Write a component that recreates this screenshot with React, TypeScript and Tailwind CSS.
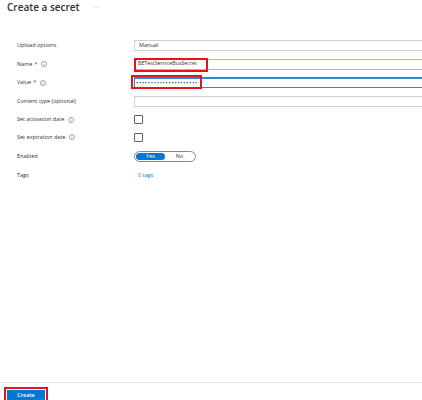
import React from 'react';

function InfoIcon() {
  return (
    <svg width="6" height="6" viewBox="0 0 12 12" className="ml-[4px] shrink-0">
      <circle cx="6" cy="6" r="5.2" fill="none" stroke="#605e5c" strokeWidth="1" />
      <line x1="6" y1="5.2" x2="6" y2="9" stroke="#605e5c" strokeWidth="1.1" />
      <circle cx="6" cy="3.4" r="0.7" fill="#605e5c" />
    </svg>
  );
}

interface RowProps {
  label: string;
  required?: boolean;
  info?: boolean;
  h: string;
  children?: React.ReactNode;
}

function Row({ label, required, info, h, children }: RowProps) {
  return (
    <div className={`flex items-center ${h}`}>
      <div className="w-[117px] shrink-0 flex items-center text-[5.5px] text-[#323130]">
        <span>{label}</span>
        {required && <span className="ml-[2px] text-[#a4262c]">*</span>}
        {info && <InfoIcon />}
      </div>
      <div className="flex-1 flex items-center">{children}</div>
    </div>
  );
}

export default function App() {
  return (
    <div className="w-[422px] h-[400px] bg-white flex flex-col overflow-hidden font-['Open_Sans',sans-serif] text-[#323130]">
      {/* HEADER */}
      <div className="flex items-center h-[14px] pl-[7px]">
        <h1 className="text-[10px] font-semibold leading-none">Create a secret</h1>
        <span className="ml-[14px] text-[6px] text-[#8a8886] leading-none">···</span>
      </div>

      {/* FORM */}
      <div className="flex-1 pl-[17px] pt-[22px]">
        <Row label="Upload options" h="h-[19px]">
          <div className="w-[300px] h-[11px] border border-[#d2d0ce] flex items-center pl-[4px] text-[5.5px]">
            Manual
          </div>
        </Row>

        <Row label="Name" required info h="h-[18px]">
          <div className="relative">
            <div className="w-[300px] h-[11px] border border-[#c9a3d6] flex items-center pl-[3px] text-[5.3px] whitespace-nowrap">
              BETestServiceBusSecret
            </div>
            <div className="absolute left-0 top-[-1px] w-[74px] h-[14px] border-2 border-[#e8121a]"></div>
          </div>
        </Row>

        <Row label="Value" required info h="h-[19px]">
          <div className="relative">
            <div className="w-[300px] h-[11px] border border-[#2b88d8] border-t-2 flex items-center pl-[1px] text-[6px] tracking-[0.7px] whitespace-nowrap leading-none">
              •••••••••••••••••••••
            </div>
            <div className="absolute left-[-3px] top-[-2px] w-[71px] h-[14px] border-2 border-[#e8121a]"></div>
          </div>
        </Row>

        <Row label="Content type (optional)" h="h-[19px]">
          <div className="w-[300px] h-[11px] border border-[#d2d0ce]"></div>
        </Row>

        <Row label="Set activation date" info h="h-[17px]">
          <div className="w-[9px] h-[9px] border border-[#605e5c] rounded-[1px]"></div>
        </Row>

        <Row label="Set expiration date" info h="h-[18px]">
          <div className="w-[9px] h-[9px] border border-[#605e5c] rounded-[1px]"></div>
        </Row>

        <Row label="Enabled" h="h-[20px]">
          <div className="w-[62px] h-[11px] rounded-full border border-[#8a8886] flex items-center p-[1px] text-[5.5px]">
            <div className="w-[29px] h-full rounded-full bg-[#0078d4] text-white flex items-center justify-center">
              Yes
            </div>
            <div className="flex-1 flex items-center justify-center text-[#323130]">No</div>
          </div>
        </Row>

        <Row label="Tags" h="h-[19px]">
          <span className="ml-[4px] text-[5.5px] text-[#0078d4]">0 tags</span>
        </Row>
      </div>

      {/* FOOTER */}
      <div className="h-[18px] shrink-0 border-t border-[#e5e5e5] pt-[4px] pl-[4px] flex items-start">
        <div className="flex border-2 border-[#e8121a] p-[1px]">
          <button className="w-[38px] h-[11px] bg-[#0078d4] text-white text-[5.5px] leading-none font-semibold flex items-center justify-center">
            Create
          </button>
        </div>
      </div>
    </div>
  );
}
